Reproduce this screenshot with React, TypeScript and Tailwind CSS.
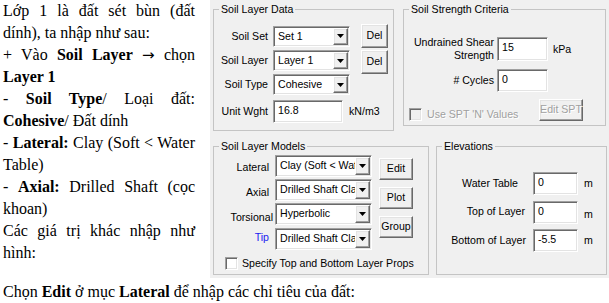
import React from 'react';

// classic win32 3D edges
const sunken =
    'border border-t-[#a0a0a0] border-l-[#a0a0a0] border-r-white border-b-white shadow-[inset_1px_1px_0_#696969,inset_-1px_-1px_0_#e3e3e3]';
const raised =
    'border border-t-white border-l-white border-r-[#696969] border-b-[#696969] shadow-[inset_-1px_-1px_0_#a0a0a0,inset_1px_1px_0_#e3e3e3]';

type BoxProps = { value: string; className?: string };

const TextBox = ({ value, className = '' }: BoxProps) => (
    <div className={`${sunken} bg-white pl-[4px] pt-[3px] leading-[13px] ${className}`}>{value}</div>
);

const Combo = ({ value, className = '' }: BoxProps) => (
    <div className={`${sunken} bg-white flex p-[1px] ${className}`}>
        <div className="flex-1 overflow-hidden whitespace-nowrap pl-[3px] pt-[2px] leading-[13px]">{value}</div>
        <div className={`${raised} w-[15px] shrink-0 bg-[#f0f0f0] flex items-center justify-center`}>
            <svg width="7" height="4" viewBox="0 0 7 4">
                <path d="M0 0h7L3.5 4z" fill="#000" />
            </svg>
        </div>
    </div>
);

const Button = ({ value, className = '' }: BoxProps) => (
    <div className={`${raised} bg-[#f0f0f0] flex items-center justify-center whitespace-nowrap ${className}`}>
        {value}
    </div>
);

const Group = ({ title, className = '', children }: { title: string; className?: string; children: React.ReactNode }) => (
    <fieldset className={`border border-[#c4c4c4] shrink-0 min-w-0 ${className}`}>
        <legend className="ml-[5px] px-[2px] leading-[12px]">{title}</legend>
        {children}
    </fieldset>
);

const SoilLayerData = () => (
    <Group title="Soil Layer Data" className="ml-[3px] w-[181px] h-[128px]">
        <div className="flex items-center h-[24px] mt-[9px]">
            <span className="w-[54px] text-right pt-[2px]">Soil Set</span>
            <Combo value="Set 1" className="ml-[5px] w-[77px] h-[21px]" />
            <Button value="Del" className="ml-[11px] w-[27px] h-[24px]" />
        </div>
        <div className="flex items-start h-[24px] mt-[2px]">
            <span className="w-[54px] h-[21px] flex items-center justify-end">Soil Layer</span>
            <Combo value="Layer 1" className="ml-[5px] w-[77px] h-[21px]" />
            <Button value="Del" className="ml-[11px] w-[27px] h-[24px]" />
        </div>
        <div className="flex items-center h-[21px]">
            <span className="w-[54px] text-right">Soil Type</span>
            <Combo value="Cohesive" className="ml-[5px] w-[77px] h-[21px]" />
        </div>
        <div className="flex items-center h-[23px] mt-[5px]">
            <span className="w-[54px] text-right">Unit Wght</span>
            <TextBox value="16.8" className="ml-[5px] w-[70px] h-[23px]" />
            <span className="ml-[6px]">kN/m3</span>
        </div>
    </Group>
);

const SoilStrength = () => (
    <Group title="Soil Strength Criteria" className="ml-[9px] w-[203px] h-[123px]">
        <div className="flex items-center mt-[21px]">
            <span className="w-[90px] text-right leading-[13px]">
                Undrained Shear
                <br />
                Strength
            </span>
            <TextBox value="15" className="ml-[3px] w-[51px] h-[24px]" />
            <span className="ml-[5px] pt-[2px]">kPa</span>
        </div>
        <div className="flex items-center mt-[7px]">
            <span className="w-[90px] text-right">#&nbsp;Cycles</span>
            <TextBox value="0" className="ml-[3px] w-[51px] h-[23px]" />
        </div>
        <div className="flex items-start mt-[7px]">
            <div className="flex items-center mt-[8px] ml-[5px] text-[#a0a0a0] [text-shadow:1px_1px_0_#fff]">
                <div className={`${sunken} w-[13px] h-[13px] bg-[#f0f0f0]`} />
                <span className="ml-[5px]">Use SPT 'N' Values</span>
            </div>
            <Button
                value="Edit SPT"
                className="ml-auto mr-[22px] w-[44px] h-[22px] text-[#a0a0a0] [text-shadow:1px_1px_0_#fff]"
            />
        </div>
    </Group>
);

const SoilLayerModels = () => (
    <Group title="Soil Layer Models" className="ml-[3px] w-[216px] h-[135px]">
        <div className="flex">
            <div className="flex flex-col mt-[3px]">
                <div className="flex items-center h-[22px]">
                    <span className="w-[55px] text-right pt-[4px]">Lateral</span>
                    <Combo value="Clay (Soft < Water Table)" className="ml-[6px] w-[97px] h-[22px]" />
                </div>
                <div className="flex items-center h-[22px] mt-[2px]">
                    <span className="w-[55px] text-right pt-[6px]">Axial</span>
                    <Combo value="Drilled Shaft Clay" className="ml-[6px] w-[97px] h-[22px]" />
                </div>
                <div className="flex items-center h-[22px] mt-[2px]">
                    <span className="w-[59px] text-right pt-[7px]">Torsional</span>
                    <Combo value="Hyperbolic" className="ml-[2px] w-[97px] h-[22px]" />
                </div>
                <div className="flex items-center h-[22px] mt-[3px]">
                    <span className="w-[55px] text-right text-[#1c1cf0] pb-[3px]">Tip</span>
                    <Combo value="Drilled Shaft Clay" className="ml-[6px] w-[97px] h-[22px]" />
                </div>
            </div>
            <div className="flex flex-col ml-[7px] mt-[6px]">
                <Button value="Edit" className="w-[34px] h-[22px]" />
                <Button value="Plot" className="w-[34px] h-[22px] mt-[7px]" />
                <Button value="Group" className="w-[34px] h-[22px] mt-[7px]" />
            </div>
        </div>
        <div className="flex items-center mt-[6px] ml-[11px]">
            <div className={`${sunken} w-[13px] h-[13px] bg-white`} />
            <span className="ml-[4px]">Specify Top and Bottom Layer Props</span>
        </div>
    </Group>
);

const Elevations = () => (
    <Group title="Elevations" className="ml-[7px] w-[171px] h-[135px]">
        <div className="flex items-center h-[23px] mt-[20px]">
            <span className="w-[81px] text-right">Water Table</span>
            <TextBox value="0" className="ml-[15px] w-[45px] h-[23px]" />
            <span className="ml-[6px]">m</span>
        </div>
        <div className="flex items-center h-[23px] mt-[6px]">
            <span className="w-[88px] text-right pb-[2px]">Top of Layer</span>
            <TextBox value="0" className="ml-[8px] w-[45px] h-[23px]" />
            <span className="ml-[6px] pt-[5px]">m</span>
        </div>
        <div className="flex items-center h-[23px] mt-[5px]">
            <span className="w-[89px] text-right">Bottom of Layer</span>
            <TextBox value="-5.5" className="ml-[7px] w-[45px] h-[23px]" />
            <span className="ml-[6px]">m</span>
        </div>
    </Group>
);

export default function App() {
    return (
        <div className="w-[609px] h-[303px] overflow-hidden bg-white text-black">
            <div className="flex items-start">
                <div className="w-[210px] shrink-0 pl-[3px] pr-[15px] font-['Liberation_Serif',serif] text-[16px] leading-[22px]">
                    <p className="text-justify">Lớp 1 là đất sét bùn (đất dính), ta nhập như sau:</p>
                    <p className="text-justify">
                        + Vào <b>Soil Layer</b> <span className="font-['DejaVu_Sans',sans-serif] text-[15px]">→</span>{' '}
                        chọn <b>Layer 1</b>
                    </p>
                    <p className="text-justify">
                        - <b>Soil Type</b>/ Loại đất: <b>Cohesive</b>/ Đất dính
                    </p>
                    <p className="text-justify">
                        - <b>Lateral:</b> Clay (Soft &lt; Water Table)
                    </p>
                    <p className="text-justify">
                        - <b>Axial:</b> Drilled Shaft (cọc khoan)
                    </p>
                    <p className="text-justify">Các giá trị khác nhập như hình:</p>
                </div>
                <div className="w-[399px] h-[278px] shrink-0 bg-[#f0f0f0] pt-[3px] font-['Liberation_Sans',Arial,sans-serif] text-[10.6px]">
                    <div className="flex">
                        <SoilLayerData />
                        <SoilStrength />
                    </div>
                    <div className="flex mt-[9px]">
                        <SoilLayerModels />
                        <Elevations />
                    </div>
                </div>
            </div>
            <p className="mt-[3px] pl-[3px] font-['Liberation_Serif',serif] text-[16px] leading-[22px]">
                Chọn <b>Edit</b> ở mục <b>Lateral</b> để nhập các chỉ tiêu của đất:
            </p>
        </div>
    );
}
